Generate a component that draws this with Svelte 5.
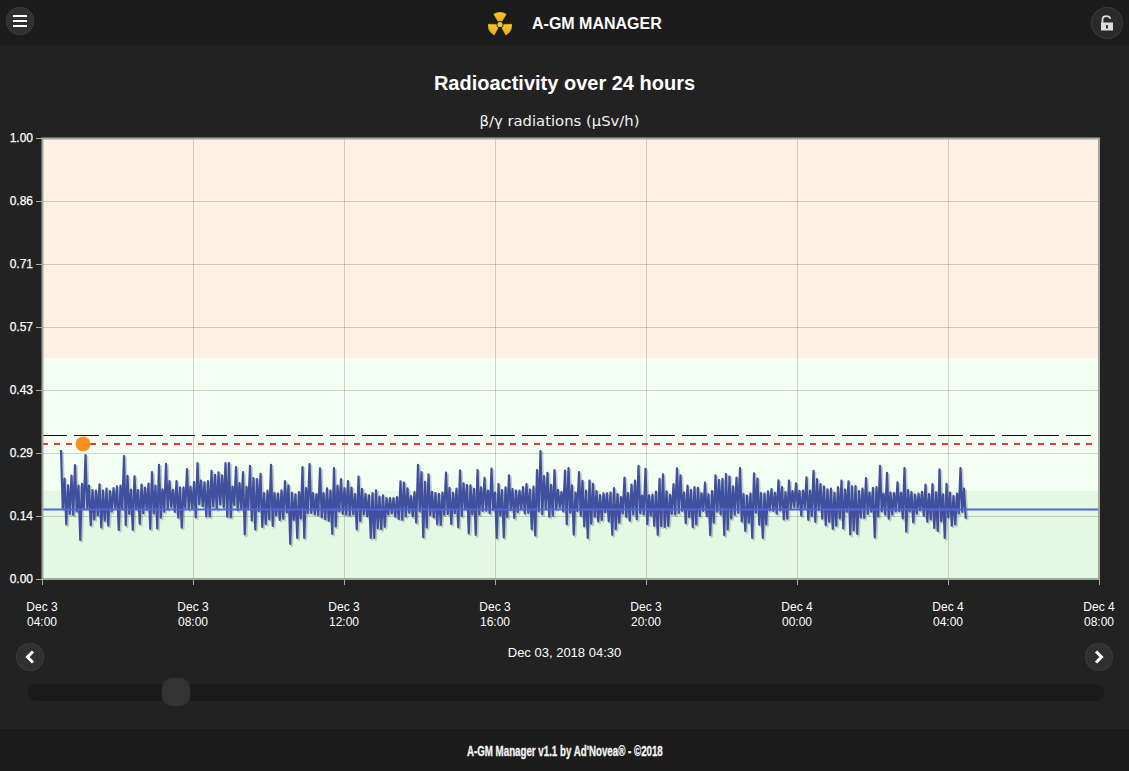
<script>
  const OFF = 108;
  const xTicks = [
    ['Dec 3', '04:00', 42], ['Dec 3', '08:00', 193], ['Dec 3', '12:00', 344], ['Dec 3', '16:00', 495],
    ['Dec 3', '20:00', 646], ['Dec 4', '00:00', 797], ['Dec 4', '04:00', 948], ['Dec 4', '08:00', 1099]
  ];
  const yTicks = [['1.00', 138], ['0.86', 201], ['0.71', 264], ['0.57', 327], ['0.43', 390], ['0.29', 453], ['0.14', 516], ['0.00', 579]];

  function rng(a) {
    return () => {
      a |= 0; a = (a + 0x6d2b79f5) | 0;
      let t = Math.imul(a ^ (a >>> 15), 1 | a);
      t = (t + Math.imul(t ^ (t >>> 7), 61 | t)) ^ t;
      return ((t ^ (t >>> 14)) >>> 0) / 4294967296;
    };
  }
  const r = rng(20181203);
  const tops = { 61: 450, 70: 472, 85: 455, 124: 456, 157: 447, 310: 464, 478: 470, 540: 451, 904: 468, 931: 468, 961: 468 };
  const bots = { 64: 527, 79: 540, 289: 544, 715: 543, 935: 535 };
  const pts = [];
  let te = 12, be = 12, up = true;
  for (let x = 61; x <= 967; x += 1.75) {
    const c = 503 + 2 * Math.sin(x / 47) + 1.5 * Math.sin(x / 19) + (x < 250 ? -4 : 0);
    const a = r(), b = r();
    const endFade = x > 960 ? 0.5 : 1;
    te = 0.25 * te + 0.75 * (8 + a * a * a * 36) * endFade;
    be = 0.25 * be + 0.75 * (7 + b * b * b * 38) * endFade;
    let y = up ? c - te : c + be;
    y = Math.max(463, Math.min(538, y));
    const px = Math.round(x);
    if (up && (tops[px] || tops[px - 1])) y = tops[px] || tops[px - 1];
    if (!up && (bots[px] || bots[px - 1])) y = bots[px] || bots[px - 1];
    pts.push(x + ',' + (y - OFF).toFixed(1));
    up = !up;
  }
  const line = pts.join(' ');

  function sector(cx, cy, a, ri, ro) {
    const w = (31 * Math.PI) / 180, p = (ang, rad) => (cx + rad * Math.cos(ang)).toFixed(2) + ' ' + (cy + rad * Math.sin(ang)).toFixed(2);
    return `M${p(a - w, ri)} L${p(a - w, ro)} A${ro} ${ro} 0 0 1 ${p(a + w, ro)} L${p(a + w, ri)} A${ri} ${ri} 0 0 0 ${p(a - w, ri)}Z`;
  }
  const blades = [-Math.PI / 2, Math.PI / 6, (5 * Math.PI) / 6].map((a) => sector(12, 12.5, a, 3.8, 12));
</script>

<div class="page">
  <header class="top">
    <button class="round small" aria-label="Menu">
      <svg width="14" height="12" viewBox="0 0 14 12"><path d="M0 1h14M0 6h14M0 11h14" stroke="#fff" stroke-width="2" /></svg>
    </button>
    <div class="brand">
      <svg width="24" height="24" viewBox="0 0 24 24">
        <defs>
          <linearGradient id="ylw" x1="0" y1="0" x2="0" y2="1">
            <stop offset="0" stop-color="#efc935" />
            <stop offset="1" stop-color="#eda915" />
          </linearGradient>
        </defs>
        {#each blades as d}<path {d} fill="url(#ylw)" stroke="#e8b420" stroke-width="0.6" stroke-linejoin="round" />{/each}
        <circle cx="12" cy="12.5" r="2.6" fill="#d8cc4c" />
      </svg>
      <span>A-GM MANAGER</span>
    </div>
    <button class="round big" aria-label="Unlock">
      <svg width="14" height="16" viewBox="0 0 14 16">
        <path d="M2.5 8V4.6C2.5 2.6 4.2 1.2 6.4 1.2c1.8 0 3.4 .9 4 2.6" fill="none" stroke="#ddd" stroke-width="1.8" />
        <rect x="1" y="7.5" width="12" height="8" fill="#ddd" />
        <rect x="6" y="10" width="2" height="3.5" fill="#333" />
      </svg>
    </button>
  </header>

  <main class="content">
    <h1>Radioactivity over 24 hours</h1>
    <h2>β/γ radiations (µSv/h)</h2>
    <svg class="chart" width="1129" height="500" viewBox="0 130 1129 500">
      <rect x="42" y="138" width="1057" height="220" fill="#fff0e5" />
      <rect x="42" y="358" width="1057" height="133" fill="#f4fff4" />
      <rect x="42" y="491" width="1057" height="88" fill="#e5f8e4" />

      {#each yTicks as [label, y]}
        <line x1="42" x2="1099" y1={y + 0.5} y2={y + 0.5} class="grid" />
        <line x1="36" x2="42" y1={y + 0.5} y2={y + 0.5} class="tick" />
        <text x="33" y={y + 4} text-anchor="end" class="lbl strong">{label}</text>
      {/each}
      {#each xTicks as [a, b, x]}
        <line x1={x + 0.5} x2={x + 0.5} y1="138" y2="579" class="grid" />
        <line x1={x + 0.5} x2={x + 0.5} y1="579" y2="585" class="tick" />
        <text x={x} y="611" text-anchor="middle" class="lbl">{a}</text>
        <text x={x} y="626" text-anchor="middle" class="lbl">{b}</text>
      {/each}

      <line x1="42" x2="1098" y1="435.5" y2="435.500" stroke="#111" stroke-width="1" stroke-dasharray="25 7" />
      <line x1="42" x2="1098" y1="444" y2="444" stroke="#e23a3a" stroke-width="2" stroke-dasharray="6 6" />

      <g transform="translate(0 108)">
        <polyline points={line} class="shadow" transform="translate(1.5 1.5)" />
        <polyline points={line} class="data" />
      </g>
      <line x1="43" x2="1098" y1="509.5" y2="509.5" stroke="#5068d8" stroke-width="2" />
      <circle cx="83" cy="444" r="7.5" fill="#f7931e" />

      <rect x="42.500" y="138.500" width="1056.500" height="440.500" fill="none" stroke="#a3a89f" stroke-width="2" />
    </svg>

    <div class="nav">
      <button class="round small" aria-label="Previous">
        <svg width="12" height="14" viewBox="0 0 12 14"><path d="M9 1.5 3.500 7 9 12.500" fill="none" stroke="#fff" stroke-width="3" /></svg>
      </button>
      <span class="date">Dec 03, 2018 04:30</span>
      <button class="round small" aria-label="Next">
        <svg width="12" height="14" viewBox="0 0 12 14"><path d="M3 1.5 8.500 7 3 12.500" fill="none" stroke="#fff" stroke-width="3" /></svg>
      </button>
    </div>

    <div class="slider">
      <div class="thumb"></div>
    </div>
  </main>

  <footer class="foot"><span>A-GM Manager v1.1 by Ad'Novea® - ©2018</span></footer>
</div>

<style>
  :global(body) {
    margin: 0;
    background: #222;
  }
  .page {
    height: 771px;
    display: flex;
    flex-direction: column;
    font-family: "Liberation Sans", Arial, sans-serif;
    color: #fff;
    background: #222;
    overflow: hidden;
  }
  .top {
    height: 45px;
    flex: none;
    background: #1c1c1c;
    display: flex;
    justify-content: space-between;
    padding: 7px 6px 0;
    box-sizing: border-box;
    position: relative;
  }
  .brand {
    position: absolute;
    left: 488px;
    top: 12px;
    display: flex;
    align-items: center;
    gap: 20px;
    font-size: 16px;
    font-weight: 700;
  }
  .round {
    border: 0;
    padding: 0;
    border-radius: 50%;
    display: flex;
    align-items: center;
    justify-content: center;
    background: #303030;
    box-shadow: 0 0 0 1px #3a3a3a inset;
  }
  .small {
    width: 28px;
    height: 28px;
  }
  .big {
    width: 32px;
    height: 32px;
    background: #2a2a2a;
  }
  .content {
    flex: 1;
    display: flex;
    flex-direction: column;
  }
  h1 {
    margin: 26px 0 0;
    font-size: 20px;
    line-height: 24px;
    font-weight: 700;
    text-align: center;
  }
  h2 {
    margin: 16px 0 0;
    padding-right: 10px;
    height: 19px;
    font: 400 14.8px/19px "DejaVu Sans", sans-serif;
    text-align: center;
    color: #f2f2f2;
  }
  .chart {
    display: block;
    flex: none;
  }
  .grid {
    stroke: rgba(90, 75, 50, 0.24);
    stroke-width: 1;
  }
  .tick {
    stroke: #aaa;
    stroke-width: 1;
  }
  .lbl {
    fill: #fff;
    font-size: 12px;
    font-family: "Liberation Sans", Arial, sans-serif;
  }
  .strong {
    stroke: #fff;
    stroke-width: 0.25;
  }
  .data,
  .shadow {
    fill: none;
    stroke-linejoin: round;
  }
  .data {
    stroke: #414f9f;
    stroke-width: 2.2;
  }
  .shadow {
    stroke: rgba(60, 70, 60, 0.25);
    stroke-width: 2.5;
  }
  .nav {
    display: flex;
    justify-content: space-between;
    align-items: center;
    padding: 0 16px;
    margin-top: 13px;
    position: relative;
  }
  .date {
    position: absolute;
    left: 0;
    right: 0;
    top: 3px;
    text-align: center;
    font-size: 13px;
    line-height: 14px;
    color: #fff;
    pointer-events: none;
  }
  .slider {
    margin: 13px 25px 0 28px;
    height: 17px;
    border-radius: 9px;
    background: #1a1a1a;
    position: relative;
  }
  .thumb {
    position: absolute;
    left: 134px;
    top: -6px;
    width: 28px;
    height: 28px;
    border-radius: 10px;
    background: #333;
  }
  .foot {
    flex: none;
    height: 42px;
    background: #1c1c1c;
    border-top: 1px solid #1a1a1a;
    box-sizing: border-box;
    text-align: center;
    font: 700 14px/42px "Liberation Sans", sans-serif;
    color: #f4f4f4;
    -webkit-text-stroke: 0.3px #f4f4f4;
  }
  .foot span {
    display: inline-block;
    transform: scaleX(0.695);
    white-space: nowrap;
  }
</style>
